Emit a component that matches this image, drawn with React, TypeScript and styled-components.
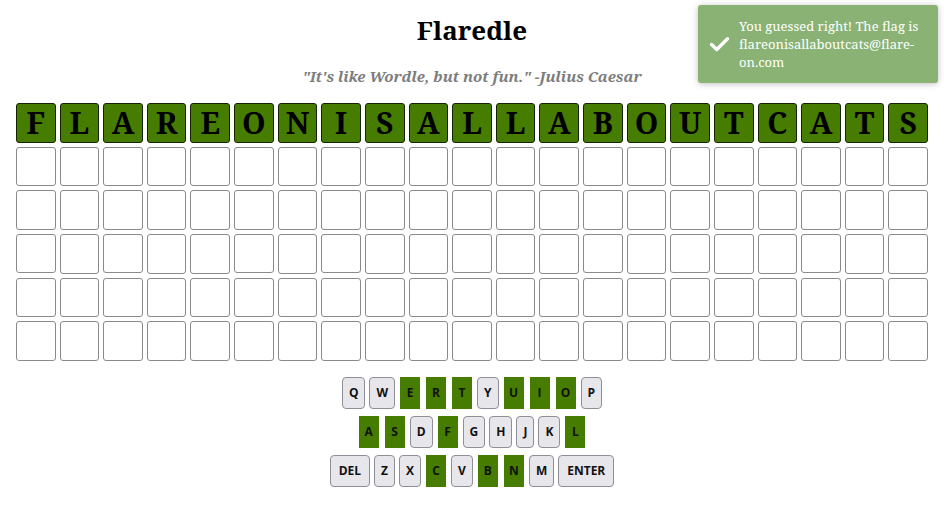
import React from "react";
import styled, { createGlobalStyle } from "styled-components";

const SOLUTION = "FLAREONISALLABOUTCATS";
const ROWS = 6;
const GREEN = "#467c00";

const KEY_ROWS = [
  ["Q", "W", "E", "R", "T", "Y", "U", "I", "O", "P"],
  ["A", "S", "D", "F", "G", "H", "J", "K", "L"],
  ["DEL", "Z", "X", "C", "V", "B", "N", "M", "ENTER"],
];

const used = new Set(SOLUTION.split(""));

const Global = createGlobalStyle`
  html, body { margin: 0; padding: 0; background: #fff; }
  body { font-family: "Noto Serif", "DejaVu Serif", serif; }
`;

const Page = styled.div`
  width: 944px;
  min-height: 518px;
  display: flex;
  flex-direction: column;
  align-items: center;
  position: relative;
`;

const Title = styled.h1`
  margin: 12px 0 0;
  font-size: 26px;
  line-height: 36px;
  font-weight: 700;
  color: #000;
`;

const Quote = styled.p`
  margin: 18px 0 0;
  font-size: 15px;
  line-height: 20px;
  font-weight: 700;
  font-style: italic;
  color: #7d7d7d;
`;

const Board = styled.div`
  margin-top: 17px;
  width: 912px;
  display: grid;
  grid-template-columns: repeat(${SOLUTION.length}, minmax(0, 1fr));
  gap: 4px;
`;

const Tile = styled.div<{ $filled: boolean }>`
  box-sizing: border-box;
  aspect-ratio: 1;
  min-height: 0;
  overflow: hidden;
  border-radius: 3px;
  border: 1px solid ${(p) => (p.$filled ? "#142400" : "#8a8a8a")};
  background: ${(p) => (p.$filled ? GREEN : "#fff")};
  display: flex;
  align-items: center;
  justify-content: center;
  font-size: 30px;
  line-height: 1;
  font-weight: 700;
  color: #000;
`;

const Keyboard = styled.div`
  margin-top: 16px;
  display: flex;
  flex-direction: column;
  align-items: center;
  gap: 7px;
`;

const KeyRow = styled.div`
  display: flex;
  gap: 4px;
`;

const Key = styled.button<{ $hit: boolean; $wide: boolean }>`
  box-sizing: border-box;
  height: 32px;
  min-width: ${(p) => (p.$hit ? "20px" : "0")};
  padding: 0 ${(p) => (p.$hit ? "5px" : p.$wide ? "8px" : "6px")};
  margin: 0 ${(p) => (p.$hit ? "1px" : "0")};
  border: ${(p) => (p.$hit ? "none" : "1px solid #8e8e98")};
  border-radius: ${(p) => (p.$hit ? "0" : "4px")};
  background: ${(p) => (p.$hit ? GREEN : "#e6e6eb")};
  font-family: "Open Sans", "Noto Sans", sans-serif;
  font-size: 12px;
  font-weight: 700;
  color: #111;
  display: flex;
  align-items: center;
  justify-content: center;
`;

const Toast = styled.div`
  position: absolute;
  top: 5px;
  right: 6px;
  width: 240px;
  box-sizing: border-box;
  padding: 12px 10px 12px 11px;
  background: #89b274;
  border-radius: 3px;
  box-shadow: 0 1px 6px rgba(0, 0, 0, 0.25);
  display: flex;
  align-items: center;
  gap: 9px;
  color: #fff;
  font-size: 13px;
  line-height: 18px;
`;

const ToastText = styled.div`
  flex: 1;
  word-break: break-word;
`;

const Check = () => (
  <svg width="21" height="16" viewBox="0 0 21 16" fill="none">
    <path
      d="M2.5 8.5 L7.8 13.5 L18.5 2.8"
      stroke="#fff"
      strokeWidth="3.4"
      strokeLinecap="round"
      strokeLinejoin="round"
    />
  </svg>
);

export default function App() {
  const letters = SOLUTION.split("");
  return (
    <Page>
      <Global />
      <Title>Flaredle</Title>
      <Quote>"It's like Wordle, but not fun." -Julius Caesar</Quote>
      <Board>
        {Array.from({ length: ROWS }).map((_, r) =>
          letters.map((ch, c) => (
            <Tile key={`${r}-${c}`} $filled={r === 0}>
              {r === 0 ? ch : ""}
            </Tile>
          ))
        )}
      </Board>
      <Keyboard>
        {KEY_ROWS.map((row, i) => (
          <KeyRow key={i}>
            {row.map((k) => (
              <Key
                key={k}
                $hit={k.length === 1 && used.has(k)}
                $wide={k.length > 1}
              >
                {k}
              </Key>
            ))}
          </KeyRow>
        ))}
      </Keyboard>
      <Toast>
        <Check />
        <ToastText>
          You guessed right! The flag is flareonisallaboutcats@flare-on.com
        </ToastText>
      </Toast>
    </Page>
  );
}
